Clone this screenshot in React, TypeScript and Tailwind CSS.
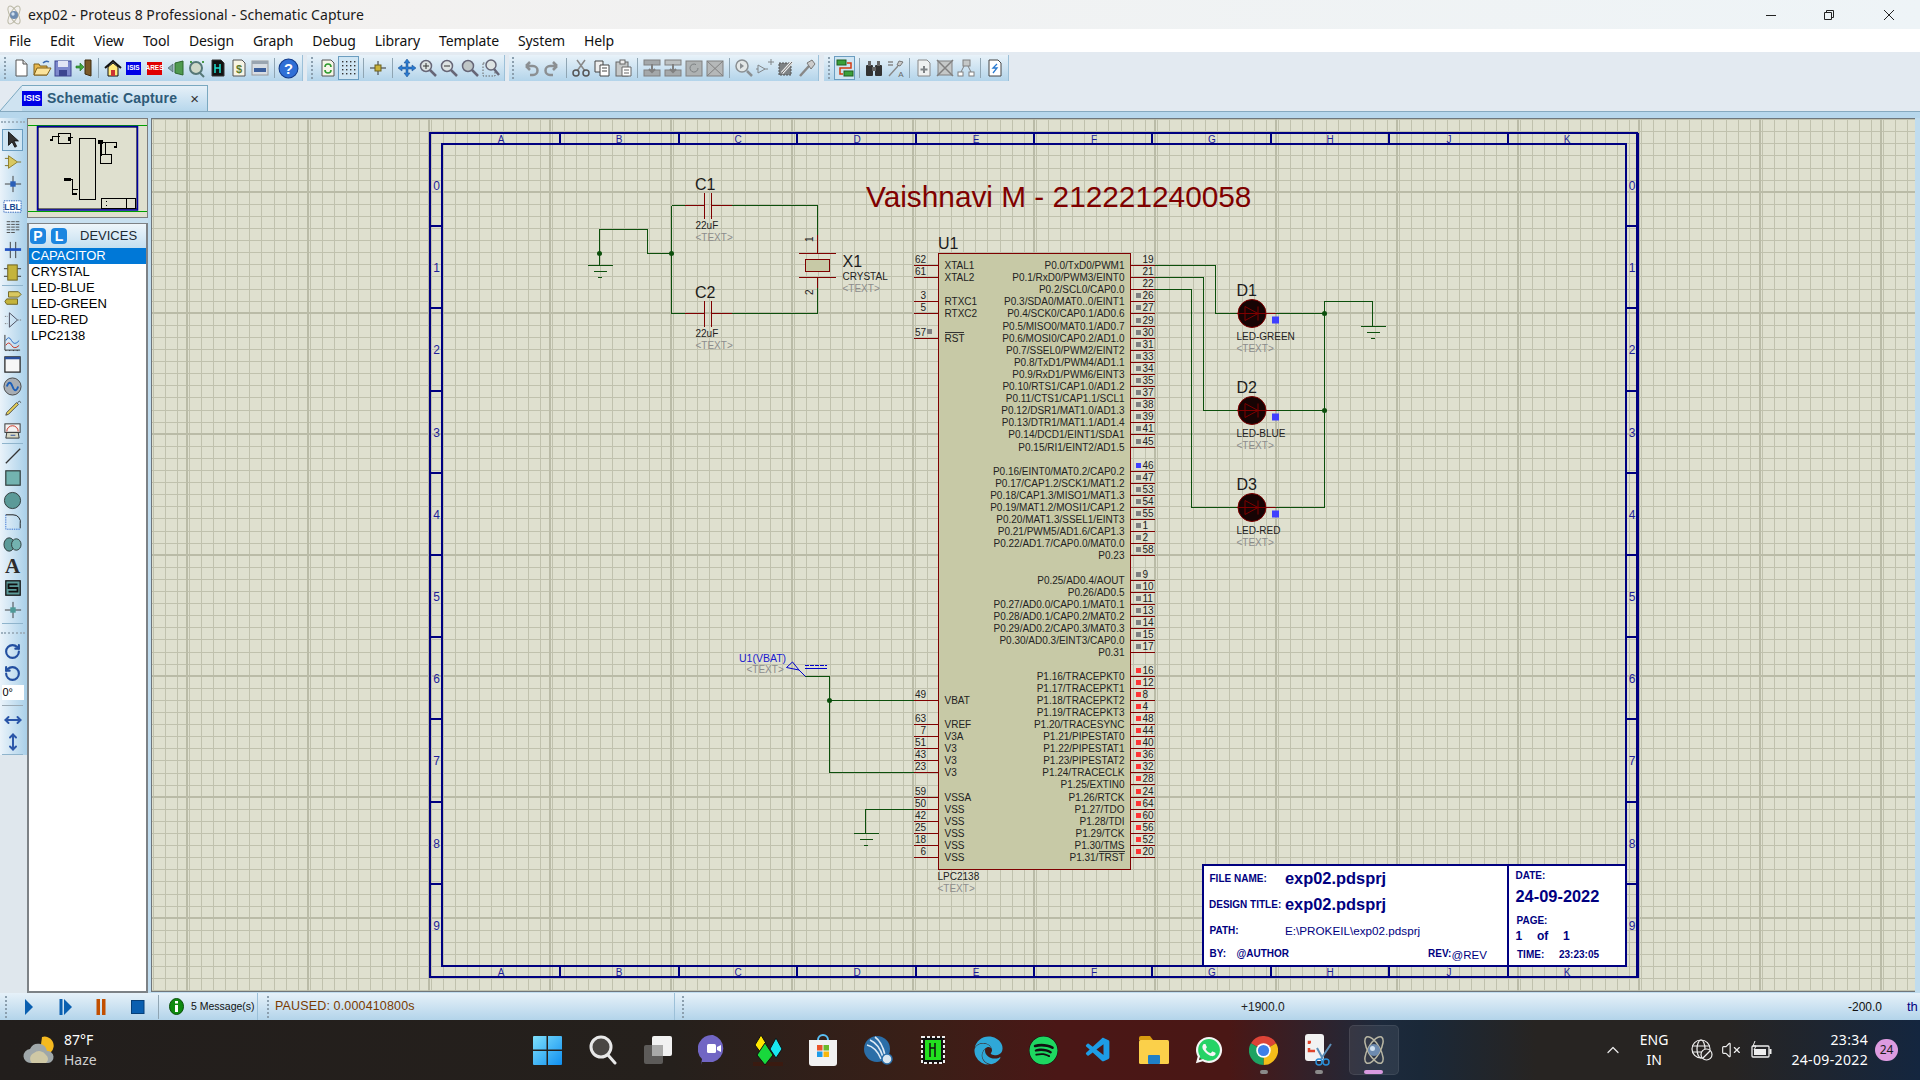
import type { ReactNode } from 'react';
import { RotateCw, RotateCcw, MoveHorizontal, MoveVertical, ChevronUp, VolumeX } from 'lucide-react';
import { FaEdge, FaSpotify, FaWhatsapp } from 'react-icons/fa';
import { VscVscode } from 'react-icons/vsc';

const WIRE = '#0c4f0c';
const RED = '#7f0000';
const NAVY = '#000080';
const GRAY_TEXT = '#8c8c8c';

type Pin = [number, string, string, string];

const rightPins: Pin[] = [
  [265, 'P0.0/TxD0/PWM1', '19', ''],
  [277, 'P0.1/RxD0/PWM3/EINT0', '21', ''],
  [289, 'P0.2/SCL0/CAP0.0', '22', ''],
  [301, 'P0.3/SDA0/MAT0..0/EINT1', '26', 'g'],
  [313, 'P0.4/SCK0/CAP0.1/AD0.6', '27', 'g'],
  [326, 'P0.5/MISO0/MAT0.1/AD0.7', '29', 'g'],
  [338, 'P0.6/MOSI0/CAP0.2/AD1.0', '30', 'g'],
  [350, 'P0.7/SSEL0/PWM2/EINT2', '31', 'g'],
  [362, 'P0.8/TxD1/PWM4/AD1.1', '33', 'g'],
  [374, 'P0.9/RxD1/PWM6/EINT3', '34', 'g'],
  [386, 'P0.10/RTS1/CAP1.0/AD1.2', '35', 'g'],
  [398, 'P0.11/CTS1/CAP1.1/SCL1', '37', 'g'],
  [410, 'P0.12/DSR1/MAT1.0/AD1.3', '38', 'g'],
  [422, 'P0.13/DTR1/MAT1.1/AD1.4', '39', 'g'],
  [434, 'P0.14/DCD1/EINT1/SDA1', '41', 'g'],
  [447, 'P0.15/RI1/EINT2/AD1.5', '45', 'g'],
  [471, 'P0.16/EINT0/MAT0.2/CAP0.2', '46', 'b'],
  [483, 'P0.17/CAP1.2/SCK1/MAT1.2', '47', 'g'],
  [495, 'P0.18/CAP1.3/MISO1/MAT1.3', '53', 'g'],
  [507, 'P0.19/MAT1.2/MOSI1/CAP1.2', '54', 'g'],
  [519, 'P0.20/MAT1.3/SSEL1/EINT3', '55', 'g'],
  [531, 'P0.21/PWM5/AD1.6/CAP1.3', '1', 'g'],
  [543, 'P0.22/AD1.7/CAP0.0/MAT0.0', '2', 'g'],
  [555, 'P0.23', '58', 'g'],
  [580, 'P0.25/AD0.4/AOUT', '9', 'g'],
  [592, 'P0.26/AD0.5', '10', 'g'],
  [604, 'P0.27/AD0.0/CAP0.1/MAT0.1', '11', 'g'],
  [616, 'P0.28/AD0.1/CAP0.2/MAT0.2', '13', 'g'],
  [628, 'P0.29/AD0.2/CAP0.3/MAT0.3', '14', 'g'],
  [640, 'P0.30/AD0.3/EINT3/CAP0.0', '15', 'g'],
  [652, 'P0.31', '17', 'g'],
  [676, 'P1.16/TRACEPKT0', '16', 'r'],
  [688, 'P1.17/TRACEPKT1', '12', 'r'],
  [700, 'P1.18/TRACEPKT2', '8', 'r'],
  [712, 'P1.19/TRACEPKT3', '4', 'r'],
  [724, 'P1.20/TRACESYNC', '48', 'r'],
  [736, 'P1.21/PIPESTAT0', '44', 'r'],
  [748, 'P1.22/PIPESTAT1', '40', 'r'],
  [760, 'P1.23/PIPESTAT2', '36', 'r'],
  [772, 'P1.24/TRACECLK', '32', 'r'],
  [784, 'P1.25/EXTIN0', '28', 'r'],
  [797, 'P1.26/RTCK', '24', 'r'],
  [809, 'P1.27/TDO', '64', 'r'],
  [821, 'P1.28/TDI', '60', 'r'],
  [833, 'P1.29/TCK', '56', 'r'],
  [845, 'P1.30/TMS', '52', 'r'],
  [857, 'P1.31/TRST', '20', 'r'],
];

const leftPins: [number, string, string][] = [
  [265, 'XTAL1', '62'],
  [277, 'XTAL2', '61'],
  [301, 'RTXC1', '3'],
  [313, 'RTXC2', '5'],
  [338, 'RST', '57'],
  [700, 'VBAT', '49'],
  [724, 'VREF', '63'],
  [736, 'V3A', '7'],
  [748, 'V3', '51'],
  [760, 'V3', '43'],
  [772, 'V3', '23'],
  [797, 'VSSA', '59'],
  [809, 'VSS', '50'],
  [821, 'VSS', '42'],
  [833, 'VSS', '25'],
  [845, 'VSS', '18'],
  [857, 'VSS', '6'],
];

const markerColors: Record<string, string> = { g: '#808080', b: '#3f3fff', r: '#ff3535' };

const colDividers = [560, 679, 797, 916, 1034, 1152, 1271, 1389, 1508];
const colLetters: [string, number][] = [
  ['A', 501],
  ['B', 619],
  ['C', 738],
  ['D', 857],
  ['E', 976],
  ['F', 1094],
  ['G', 1212],
  ['H', 1330],
  ['J', 1449],
  ['K', 1567],
];
const rowDividers = [226, 308, 391, 473, 555, 637, 719, 802, 884];

const minorX = Array.from({ length: 150 }, (_, i) => Math.round(152.5 + i * 12.1));
const minorY = Array.from({ length: 74 }, (_, i) => Math.round(119.1 + i * 12.1));
const majorX = Array.from({ length: 15 }, (_, i) => Math.round(187 + i * 121));
const majorY = [71, 192, 313, 434, 555, 676, 797, 918];

function Ground({ x, y }: { x: number; y: number }) {
  return (
    <g stroke={WIRE} shapeRendering="crispEdges">
      <path d={`M${x - 12} ${y}H${x + 13}M${x - 6} ${y + 6}H${x + 7}M${x - 2} ${y + 12}H${x + 2}`} />
    </g>
  );
}

function Dot({ x, y }: { x: number; y: number }) {
  return <circle cx={x} cy={y} r={2.5} fill={WIRE} />;
}

function Led({ y, name, part }: { y: number; name: string; part: string }) {
  return (
    <g>
      <text x={1236.5} y={y - 18} fontSize={16} fill="#1c1c1c">
        {name}
      </text>
      <circle cx={1252} cy={y} r={14} fill="#170404" stroke={RED} />
      <path d={`M1237 ${y}H1266M1245 ${y - 7}V${y + 7}L1258 ${y}ZM1258 ${y - 7}V${y + 7}`} fill="none" stroke={RED} />
      <path d={`M1266 ${y}H1276`} stroke={RED} shapeRendering="crispEdges" />
      <rect x={1272} y={y + 3} width={7} height={7} fill="#3f3fff" />
      <text x={1236.5} y={y + 26} fontSize={10} fill="#222">
        {part}
      </text>
      <text x={1236.5} y={y + 38} fontSize={10} fill={GRAY_TEXT}>
        {'<TEXT>'}
      </text>
    </g>
  );
}

function Capacitor({ y, name }: { y: number; name: string }) {
  return (
    <g>
      <path
        d={`M684.5 ${y}H704.5M704.5 ${y - 13}V${y + 13}M711.5 ${y - 13}V${y + 13}M711.5 ${y}H732`}
        stroke={RED}
        fill="none"
        shapeRendering="crispEdges"
      />
      <text x={695} y={y - 16} fontSize={16} fill="#1c1c1c">
        {name}
      </text>
      <text x={695.5} y={y + 23} fontSize={10} fill="#222">
        22uF
      </text>
      <text x={695.5} y={y + 35} fontSize={10} fill={GRAY_TEXT}>
        {'<TEXT>'}
      </text>
    </g>
  );
}

function TitleBlock() {
  const t = { fill: NAVY };
  return (
    <g {...t}>
      <rect x={1203} y={865} width={423} height={101} fill="#fff" stroke={NAVY} strokeWidth={2} shapeRendering="crispEdges" />
      <path d="M1508 865V966" stroke={NAVY} strokeWidth={2} shapeRendering="crispEdges" />
      <g fontSize={10} fontWeight={700}>
        <text x={1209.5} y={882}>FILE NAME:</text>
        <text x={1209} y={908}>DESIGN TITLE:</text>
        <text x={1209.5} y={934}>PATH:</text>
        <text x={1209.5} y={957}>BY:</text>
        <text x={1236.5} y={957}>@AUTHOR</text>
        <text x={1428} y={957}>REV:</text>
        <text x={1515.5} y={879}>DATE:</text>
        <text x={1516.5} y={924}>PAGE:</text>
        <text x={1517} y={958}>TIME:</text>
        <text x={1559} y={958}>23:23:05</text>
      </g>
      <g fontSize={16.4} fontWeight={700}>
        <text x={1285} y={883.5}>exp02.pdsprj</text>
        <text x={1285} y={910}>exp02.pdsprj</text>
        <text x={1515.5} y={902}>24-09-2022</text>
      </g>
      <text x={1285} y={935} fontSize={11.7}>{'E:\\PROKEIL\\exp02.pdsprj'}</text>
      <text x={1451.5} y={959} fontSize={11.5}>@REV</text>
      <g fontSize={12} fontWeight={700}>
        <text x={1515.5} y={939.5}>1</text>
        <text x={1537} y={939.5}>of</text>
        <text x={1563} y={939.5}>1</text>
      </g>
    </g>
  );
}

function Schematic() {
  return (
    <svg width={1763} height={872} viewBox="152 119 1763 872" className="block font-['Liberation_Sans',Arial,sans-serif]">
      <rect x={152} y={118} width={1763} height={873} fill="#dfe0cf" />

      {/* grid */}
      <g stroke="#c0c1ad" shapeRendering="crispEdges">
        {minorX.map((x) => (
          <path key={x} d={`M${x + 0.5} 118V991`} />
        ))}
        {minorY.map((y) => (
          <path key={y} d={`M152 ${y + 0.5}H1915`} />
        ))}
      </g>
      <g stroke="#babba7" strokeWidth={2} shapeRendering="crispEdges">
        {majorX.map((x) => (
          <path key={x} d={`M${x} 118V991`} />
        ))}
        {majorY.map((y) => (
          <path key={y} d={`M152 ${y}H1915`} />
        ))}
      </g>

      {/* sheet frame */}
      <g stroke={NAVY} strokeWidth={2} fill="none" shapeRendering="crispEdges">
        <rect x={430} y={133} width={1207} height={844} />
        <rect x={442} y={144} width={1184} height={822} />
        {colDividers.map((x) => (
          <path key={x} d={`M${x} 133V144M${x} 966V977`} />
        ))}
        {rowDividers.map((y) => (
          <path key={y} d={`M430 ${y}H442M1626 ${y}H1637`} />
        ))}
      </g>
      <path d="M1638.5 133V978" stroke={NAVY} fill="none" shapeRendering="crispEdges" />
      <g fontSize={10} fill="#1f1f99" textAnchor="middle">
        {colLetters.map(([l, x]) => (
          <g key={l}>
            <text x={x} y={143}>{l}</text>
            <text x={x} y={976}>{l}</text>
          </g>
        ))}
      </g>
      <g fontSize={12} fill="#1f1f99" textAnchor="middle">
        {Array.from({ length: 10 }, (_, i) => (
          <g key={i}>
            <text x={436.5} y={190 + i * 82.2}>{i}</text>
            <text x={1632} y={190 + i * 82.2}>{i}</text>
          </g>
        ))}
      </g>

      <text x={866} y={207} fontSize={29.8} fill={RED}>
        Vaishnavi M - 212221240058
      </text>

      {/* crystal section wires */}
      <g fill="none" stroke={WIRE} shapeRendering="crispEdges">
        <path d="M599.5 253V229.5H647.5V253.5H671.5M599.5 253V265M671.5 205.5V313.5M671.5 205.5H685M671.5 313.5H685M732 205.5H817.5V235M732 313.5H817.5V288" />
      </g>
      <Ground x={599.5} y={265.5} />
      <Dot x={599.5} y={253.5} />
      <Dot x={671.5} y={253.5} />
      <Capacitor y={205.5} name="C1" />
      <Capacitor y={313.5} name="C2" />
      <g fill="none" stroke={RED} shapeRendering="crispEdges">
        <path d="M817.5 235V253.5M799 253.5H836M799 277.5H836M817.5 277.5V288" />
        <rect x={805.5} y={259.5} width={24} height={12} fill="#c7c9a6" />
      </g>
      <text transform="translate(813 242) rotate(-90)" fontSize={10} fill="#222">1</text>
      <text transform="translate(813 295) rotate(-90)" fontSize={10} fill="#222">2</text>
      <text x={842.5} y={267} fontSize={16} fill="#1c1c1c">X1</text>
      <text x={842.5} y={280} fontSize={10} fill="#222">CRYSTAL</text>
      <text x={842.5} y={292} fontSize={10} fill={GRAY_TEXT}>{'<TEXT>'}</text>

      {/* U1 */}
      <text x={938} y={249} fontSize={16} fill="#1c1c1c">U1</text>
      <rect x={938.5} y={253.5} width={192} height={616} fill="#c7c9a6" stroke={RED} shapeRendering="crispEdges" />
      <g stroke={RED} shapeRendering="crispEdges">
        {rightPins.map(([y, , n]) => (
          <path key={n} d={`M1131 ${y + 0.5}H1155`} />
        ))}
        {leftPins.map(([y, , n]) => (
          <path key={n} d={`M914 ${y + 0.5}H938`} />
        ))}
      </g>
      <g fontSize={10} fill="#222">
        {rightPins.map(([y, label, n, m]) => (
          <g key={n}>
            <text x={1124.5} y={y + 3.5} textAnchor="end">{label}</text>
            <text x={1142.5} y={y - 2.5}>{n}</text>
            {m && <rect x={1136} y={y - 8} width={5} height={5} fill={markerColors[m]} />}
          </g>
        ))}
        {leftPins.map(([y, label, n]) => (
          <g key={n}>
            <text x={944.5} y={y + 3.5}>{label}</text>
            <text x={926} y={y - 2.5} textAnchor="end">{n}</text>
          </g>
        ))}
      </g>
      <rect x={927} y={329} width={5} height={5} fill="#808080" />
      <path d="M944.5 332.5H964M1098.5 851.5H1124.5" stroke="#333" shapeRendering="crispEdges" />
      <text x={937.5} y={880} fontSize={10} fill="#222">LPC2138</text>
      <text x={937.5} y={892} fontSize={10} fill={GRAY_TEXT}>{'<TEXT>'}</text>

      {/* LEDs and their wires */}
      <g fill="none" stroke={WIRE} shapeRendering="crispEdges">
        <path d="M1155 265.5H1215.5V313.5H1237M1155 277.5H1203.5V410.5H1237M1155 289.5H1191.5V507.5H1237" />
        <path d="M1276 313.5H1324.5M1266 410.5H1324.5M1266 507.5H1324.5V301.5H1372.5V326" />
      </g>
      <Led y={313.5} name="D1" part="LED-GREEN" />
      <Led y={410.5} name="D2" part="LED-BLUE" />
      <Led y={507.5} name="D3" part="LED-RED" />
      <Dot x={1324.5} y={313.5} />
      <Dot x={1324.5} y={410.5} />
      <Ground x={1372.5} y={326.5} />

      {/* power terminal and ground at the bottom */}
      <g fill="none" stroke={WIRE} shapeRendering="crispEdges">
        <path d="M805 676.5H829.5V772.5H914M829.5 700.5H914M914 809.5H865.5V833" />
      </g>
      <Dot x={829.5} y={700.5} />
      <Ground x={865.5} y={833.5} />
      <path d="M805.5 676.5L799 670L786.5 667.5L792.5 662L799 670" fill="none" stroke="#0000cc" />
      <path d="M805 668.5H827" stroke="#0000cc" shapeRendering="crispEdges" />
      <path d="M805 665.5H827" stroke="#0000cc" strokeDasharray="4 1" shapeRendering="crispEdges" />
      <text x={739} y={661.5} fontSize={10.5} fill="#1a1ad0">U1(VBAT)</text>
      <text x={746.5} y={673} fontSize={10} fill={GRAY_TEXT}>{'<TEXT>'}</text>

      <TitleBlock />
    </svg>
  );
}

function Ico({ children, size = 20 }: { children: ReactNode; size?: number }) {
  return (
    <svg width={size} height={size} viewBox="0 0 20 20" className="shrink-0">
      {children}
    </svg>
  );
}

function Cell({ children, active }: { children: ReactNode; active?: boolean }) {
  return (
    <div
      className={
        active
          ? 'flex h-[24px] w-[21px] shrink-0 items-center justify-center border border-[#6b9dc0] bg-[#cfe5f3]'
          : 'flex h-[24px] w-[21px] shrink-0 items-center justify-center'
      }
    >
      {children}
    </div>
  );
}

function Sep() {
  return <div className="mx-[3.5px] h-[20px] w-px shrink-0 bg-[#8fa5b3]" />;
}

function Grip() {
  return <div className="h-[22px] w-[2px] shrink-0 border-l-2 border-dotted border-[#8b9fae]" />;
}

function Section({ children, className }: { children: ReactNode; className: string }) {
  return (
    <div className={`flex h-[26px] items-center border-r border-[#9cc0d8] bg-linear-to-b from-[#e8f2f9] to-[#b3d4ea] ${className}`}>
      {children}
    </div>
  );
}

function SmallLogo({ label, color }: { label: string; color: string }) {
  return (
    <div
      className="flex h-[13px] w-[15px] shrink-0 items-center justify-center text-[6.5px] leading-none font-bold text-white"
      style={{ background: color }}
    >
      {label}
    </div>
  );
}

function MainToolbar() {
  return (
    <div className="flex h-[29px] shrink-0 items-end bg-[#e3eaf1] pb-0">
      <Section className="w-[303px] pl-[4px]">
        <Grip />
        <div className="w-[4px]" />
        <Cell><Ico><path d="M5 2h7l4 4v12H5z" fill="#fff" stroke="#555" /><path d="M12 2v4h4" fill="#ddd" stroke="#555" /></Ico></Cell>
        <Cell><Ico><path d="M2 17V6h5l1 2h7v9z" fill="#e7b84f" stroke="#80611a" /><path d="M2 17l3-7h14l-4 7z" fill="#fbe39b" stroke="#80611a" /><path d="M11 5q3-3 6-1" fill="none" stroke="#3c6ab0" strokeWidth={1.5} /></Ico></Cell>
        <Cell><Ico><rect x={2} y={3} width={16} height={15} fill="#7d88cc" stroke="#3c4590" /><rect x={5} y={3} width={10} height={6} fill="#e2e5f5" /><rect x={6} y={12} width={8} height={6} fill="#3c4590" /></Ico></Cell>
        <Cell><Ico><path d="M11 2h6v16l-6-2z" fill="#7a5a28" stroke="#3e2c10" /><path d="M2 8h4V5l4 4-4 4v-3H2z" fill="#3fa83f" stroke="#1d6b1d" strokeWidth={0.6} /></Ico></Cell>
        <Sep />
        <Cell><Ico><path d="M2 10l8-7 8 7" fill="none" stroke="#111" strokeWidth={2} /><path d="M5 9l5-4 5 4v9H5z" fill="#ffe97a" stroke="#111" /><rect x={8} y={12} width={4} height={6} fill="#c33" /></Ico></Cell>
        <Cell><SmallLogo label="ISIS" color="#0000e6" /></Cell>
        <Cell><SmallLogo label="ARES" color="#e00000" /></Cell>
        <Cell><Ico><path d="M2 10l5-4v8z" fill="#7fa6a0" stroke="#456" strokeWidth={0.6} /><path d="M9 5l8-2v14l-8-2z" fill="#4f9a4f" stroke="#2d662d" /></Ico></Cell>
        <Cell><Ico><circle cx={9} cy={10} r={6} fill="#cfd8c8" stroke="#577" strokeWidth={2} /><path d="M13 15l4 4" stroke="#577" strokeWidth={2} /><path d="M3 3h2v2H3zM15 3h2v2h-2z" fill="#4a9a4a" /></Ico></Cell>
        <Cell><Ico><path d="M4 2h9l3 3v13H4z" fill="#111" stroke="#333" /><path d="M7 6v9M12 6v9M7 10h5" stroke="#1fe0d0" strokeWidth={1.5} /></Ico></Cell>
        <Cell><Ico><path d="M4 2h9l3 3v13H4z" fill="#f7f4e4" stroke="#555" /><text x={10} y={15} fontSize={11} fontWeight={700} fill="#5c7a2a" textAnchor="middle">$</text></Ico></Cell>
        <Cell><Ico><rect x={2} y={3} width={16} height={14} fill="#d7dde3" stroke="#999" /><rect x={2} y={3} width={16} height={3} fill="#9aa5b0" /><rect x={4} y={10} width={12} height={4} fill="#3c5f9c" /></Ico></Cell>
        <Sep />
        <Cell><Ico size={21}><circle cx={10} cy={10} r={9} fill="#2f6fd6" stroke="#123a8a" /><text x={10} y={15} fontSize={14} fontWeight={700} fill="#fff" textAnchor="middle">?</text></Ico></Cell>
      </Section>
      <Section className="ml-[4px] w-[198px] pl-[4px]">
        <Grip />
        <div className="w-[4px]" />
        <Cell><Ico><path d="M4 2h9l3 3v13H4z" fill="#f6f5e8" stroke="#555" /><path d="M7 9a3 3 0 0 1 6 0M13 12a3 3 0 0 1-6 0" fill="none" stroke="#2f9a2f" strokeWidth={1.6} /></Ico></Cell>
        <Cell active><Ico><g fill="#333"><rect x={3} y={3} width={1.4} height={1.4} /><rect x={7} y={3} width={1.4} height={1.4} /><rect x={11} y={3} width={1.4} height={1.4} /><rect x={15} y={3} width={1.4} height={1.4} /><rect x={3} y={7} width={1.4} height={1.4} /><rect x={7} y={7} width={1.4} height={1.4} /><rect x={11} y={7} width={1.4} height={1.4} /><rect x={15} y={7} width={1.4} height={1.4} /><rect x={3} y={11} width={1.4} height={1.4} /><rect x={7} y={11} width={1.4} height={1.4} /><rect x={11} y={11} width={1.4} height={1.4} /><rect x={15} y={11} width={1.4} height={1.4} /><rect x={3} y={15} width={1.4} height={1.4} /><rect x={7} y={15} width={1.4} height={1.4} /><rect x={11} y={15} width={1.4} height={1.4} /><rect x={15} y={15} width={1.4} height={1.4} /></g></Ico></Cell>
        <Sep />
        <Cell><Ico><path d="M2 10h16M10 3v14" stroke="#333" /><rect x={7} y={7} width={6} height={6} fill="#c9b23a" stroke="#6b5f1c" /></Ico></Cell>
        <Sep />
        <Cell><Ico><path d="M10 1l3 4h-2v4h4V7l4 3-4 3v-2h-4v4h2l-3 4-3-4h2v-4H5v2l-4-3 4-3v2h4V5H7z" fill="#2a7ad0" stroke="#14488a" strokeWidth={0.5} /></Ico></Cell>
        <Cell><Ico><circle cx={8} cy={8} r={5.5} fill="#dde3e3" stroke="#667" strokeWidth={1.5} /><path d="M12 12l6 6" stroke="#667" strokeWidth={2.5} /><path d="M5 8h6M8 5v6" stroke="#333" /></Ico></Cell>
        <Cell><Ico><circle cx={8} cy={8} r={5.5} fill="#dde3e3" stroke="#667" strokeWidth={1.5} /><path d="M12 12l6 6" stroke="#667" strokeWidth={2.5} /><path d="M5 8h6" stroke="#333" /></Ico></Cell>
        <Cell><Ico><circle cx={8} cy={8} r={5.5} fill="#bfc6c6" stroke="#667" strokeWidth={1.5} /><path d="M12 12l6 6" stroke="#667" strokeWidth={2.5} /></Ico></Cell>
        <Cell><Ico><rect x={2} y={5} width={12} height={13} fill="none" stroke="#666" strokeDasharray="1.5 1.5" /><circle cx={10} cy={7} r={5} fill="#dde3e3" stroke="#667" strokeWidth={1.5} /><path d="M13 11l5 6" stroke="#667" strokeWidth={2.5} /></Ico></Cell>
      </Section>
      <Section className="ml-[4px] w-[310px] pl-[3px]">
        <Grip />
        <div className="w-[6px]" />
        <Cell><Ico><path d="M5 8h7a4 4 0 0 1 0 9H9M5 8l4-4M5 8l4 4" fill="none" stroke="#8b8f92" strokeWidth={2.5} /></Ico></Cell>
        <Cell><Ico><path d="M15 8H8a4 4 0 0 0 0 9h3M15 8l-4-4M15 8l-4 4" fill="none" stroke="#8b8f92" strokeWidth={2.5} /></Ico></Cell>
        <Sep />
        <Cell><Ico><path d="M6 2l8 11M14 2L6 13" stroke="#888" strokeWidth={1.5} /><circle cx={5} cy={15} r={3} fill="none" stroke="#555" strokeWidth={1.5} /><circle cx={15} cy={15} r={3} fill="none" stroke="#555" strokeWidth={1.5} /></Ico></Cell>
        <Cell><Ico><path d="M3 3h8v11H3z" fill="#eee" stroke="#444" /><path d="M8 7h9v11H8z" fill="#fff" stroke="#444" /><path d="M10 10h5M10 13h5" stroke="#444" /></Ico></Cell>
        <Cell><Ico><rect x={3} y={4} width={12} height={14} fill="#c5c8c8" stroke="#666" /><rect x={7} y={2} width={5} height={4} fill="#eee" stroke="#666" /><path d="M9 9h9v9H9z" fill="#fff" stroke="#666" /><path d="M11 12h5M11 15h5" stroke="#666" /></Ico></Cell>
        <Sep />
        <Cell><Ico><rect x={2} y={2} width={16} height={5} fill="#a4a8aa" stroke="#808080" /><rect x={2} y={12} width={16} height={6} fill="#a4a8aa" stroke="#808080" /><path d="M10 6v8M7 11l3 3 3-3" fill="none" stroke="#808080" strokeWidth={2} /></Ico></Cell>
        <Cell><Ico><rect x={2} y={2} width={16} height={5} fill="#bcc0c1" stroke="#808080" /><rect x={2} y={12} width={16} height={6} fill="#a4a8aa" stroke="#808080" /><path d="M10 6v8M7 11l3 3 3-3" fill="none" stroke="#808080" strokeWidth={2} /></Ico></Cell>
        <Cell><Ico><rect x={2} y={3} width={16} height={15} fill="#aeb2b3" stroke="#808080" /><path d="M14 10a4 4 0 1 1-2-3.4" fill="none" stroke="#7c8082" /></Ico></Cell>
        <Cell><Ico><rect x={2} y={3} width={16} height={15} fill="#b5b8b9" stroke="#808080" /><path d="M2 3l16 15M18 3L2 18" stroke="#808080" /></Ico></Cell>
        <Sep />
        <Cell><Ico><circle cx={8} cy={8} r={6} fill="#e3e7e7" stroke="#8a8f92" strokeWidth={1.5} /><path d="M13 13l5 5" stroke="#8a8f92" strokeWidth={2.5} /><path d="M6 5v6l4-3z" fill="#8a8f92" /></Ico></Cell>
        <Cell><Ico><path d="M3 7v8l7-4zM1 11h2M10 11h3M13 4h6M16 1v6" fill="none" stroke="#808588" /></Ico></Cell>
        <Cell><Ico><rect x={3} y={5} width={12} height={12} fill="#7d8184" stroke="#555" strokeDasharray="2 1" /><path d="M6 15L16 4" stroke="#eee" strokeWidth={3} /><path d="M6 15L16 4" stroke="#666" /></Ico></Cell>
        <Cell><Ico><path d="M3 18L12 8" stroke="#888" strokeWidth={2.5} /><path d="M10 5l5-3 3 4-4 5z" fill="#ccc" stroke="#777" /></Ico></Cell>
      </Section>
      <Section className="ml-[5px] w-[185px] pl-[4px]">
        <Grip />
        <div className="w-[4px]" />
        <Cell active><Ico><rect x={2} y={2} width={9} height={5} fill="#3aa03a" stroke="#1f5c1f" /><rect x={9} y={13} width={9} height={5} fill="#3aa03a" stroke="#1f5c1f" /><path d="M12 5h4v5H5v6h3" fill="none" stroke="#d43a10" strokeWidth={1.5} /></Ico></Cell>
        <Sep />
        <Cell><Ico><rect x={2} y={7} width={7} height={11} rx={1} fill="#333" /><rect x={11} y={7} width={7} height={11} rx={1} fill="#333" /><rect x={4} y={3} width={3} height={5} fill="#666" /><rect x={13} y={3} width={3} height={5} fill="#666" /><rect x={8} y={9} width={4} height={4} fill="#666" /></Ico></Cell>
        <Cell><Ico><path d="M3 4h5M3 7h5M4 18l9-10" fill="none" stroke="#888" strokeWidth={1.4} /><path d="M12 7l2-4 4 1-3 4z" fill="#ccc" stroke="#777" /><text x={16} y={19} fontSize={8} fill="#666" textAnchor="middle">A</text></Ico></Cell>
        <Sep />
        <Cell><Ico><path d="M4 2h9l3 3v13H4z" fill="#eef0f0" stroke="#888" /><path d="M10 8v7M6.5 11.5h7" stroke="#7d8184" strokeWidth={2} /></Ico></Cell>
        <Cell><Ico><path d="M3 3h14v14H3z" fill="#c5c8c8" stroke="#808080" /><path d="M2 2l16 16M18 2L2 18" stroke="#808080" strokeWidth={1.5} /></Ico></Cell>
        <Cell><Ico><rect x={7} y={2} width={7} height={6} fill="#c5c8c8" stroke="#808080" /><rect x={2} y={14} width={5} height={4} fill="#fff" stroke="#808080" /><rect x={13} y={14} width={5} height={4} fill="#fff" stroke="#808080" /><path d="M5 14l3-6M15 14l-3-6" stroke="#808080" /></Ico></Cell>
        <Sep />
        <Cell><Ico><path d="M4 2h9l3 3v13H4z" fill="#fff" stroke="#444" /><path d="M12 6l-4 4h4l-4 5" fill="none" stroke="#2a7ad0" strokeWidth={1.3} /></Ico></Cell>
      </Section>
    </div>
  );
}

function Tool({ children, active }: { children: ReactNode; active?: boolean }) {
  return (
    <div
      className={
        active
          ? 'flex h-[22px] w-[21px] items-center justify-center border border-[#6b9dc0] bg-[#cfe5f3]'
          : 'flex h-[22px] w-[21px] items-center justify-center'
      }
    >
      {children}
    </div>
  );
}

function ToolSep() {
  return <div className="my-[1.5px] h-px w-[21px] bg-[#8fb4cc]" />;
}

function LeftTools() {
  return (
    <div className="flex w-[27px] shrink-0 flex-col bg-[#dfe7ed]">
      <div className="flex flex-col items-center bg-linear-to-r from-[#eaf3fa] to-[#a9d0e9] pr-[3px] pl-[1px]">
        <div className="mt-[3px] mb-[6px] h-[2px] w-[24px] border-t-2 border-dotted border-[#9fb2c0]" />
        <Tool active><Ico size={18}><path d="M5 1v15l4-4 3 6 2-1-3-6h5z" fill="#333" stroke="#111" /></Ico></Tool>
        <Tool><Ico size={18}><path d="M1 6h5M1 14h5M15 10h4" stroke="#7a6b20" /><path d="M5 3l10 7-10 7z" fill="#d9c860" stroke="#8c7a22" /></Ico></Tool>
        <Tool><Ico size={18}><path d="M1 10h18M10 1v18" stroke="#333" /><rect x={7} y={7} width={6} height={6} fill="#2a5fb8" /></Ico></Tool>
        <Tool><Ico size={19}><rect x={1} y={4} width={18} height={12} fill="#fff" stroke="#2a5fb8" strokeDasharray="1.5 1" /><text x={10} y={13.5} fontSize={9} fontWeight={700} fill="#1d4a92" textAnchor="middle">LBL</text></Ico></Tool>
        <Tool><Ico size={18}><path d="M3 3h14M3 6h14M3 9h14M3 12h14M3 15h10" stroke="#444" strokeDasharray="4 1" /></Ico></Tool>
        <Tool><Ico size={18}><path d="M7 1v18M13 1v18" stroke="#333" /><rect x={1} y={8} width={18} height={3} fill="#2050c0" /></Ico></Tool>
        <Tool><Ico size={19}><path d="M1 6h4M15 6h4M1 14h4M15 14h4" stroke="#333" /><rect x={5} y={2} width={10} height={16} fill="#c4b43c" stroke="#6b5f1c" /></Ico></Tool>
        <ToolSep />
        <Tool><Ico size={18}><path d="M5 3h11l3 3-3 3H5z" fill="#d9c860" stroke="#6b5f1c" /><path d="M3 11h12v6H3l-2-3z" fill="#c4b43c" stroke="#6b5f1c" /></Ico></Tool>
        <Tool><Ico size={18}><path d="M1 6h3M1 14h3M15 10h4" stroke="#777" strokeDasharray="1.5 1" /><path d="M6 2l9 8-9 8z" fill="none" stroke="#445" /></Ico></Tool>
        <Tool><Ico size={19}><path d="M2 2v16h16" fill="none" stroke="#333" /><path d="M3 8q3-6 6 0t8 0" fill="none" stroke="#2a6ac0" /><path d="M3 13q3-5 6 0t8 0" fill="none" stroke="#c83020" /><path d="M3 18v1M7 18v1M11 18v1M15 18v1" stroke="#333" /></Ico></Tool>
        <Tool><Ico size={19}><rect x={2} y={2} width={16} height={16} fill="#f7f7f7" stroke="#222" strokeWidth={1.3} /><rect x={2} y={2} width={16} height={2.5} fill="#2a4f9c" /></Ico></Tool>
        <Tool><Ico size={19}><circle cx={10} cy={10} r={9} fill="#a8adb3" stroke="#444" /><path d="M4 10q3-8 6 0t6 0" fill="none" stroke="#1d5fb8" strokeWidth={2} /></Ico></Tool>
        <Tool><Ico size={18}><path d="M2 18l3-1L16 6l-2-2L3 15z" fill="#e6cf55" stroke="#444" /><path d="M15 4q2-3 4 0" fill="none" stroke="#444" /></Ico></Tool>
        <Tool><Ico size={19}><rect x={2} y={3} width={16} height={9} fill="#f3f3f3" stroke="#333" /><path d="M4 11a6 6 0 0 1 12 0" fill="none" stroke="#c83020" /><path d="M4 12l-1 6h14l-1-6z" fill="#d8d8c4" stroke="#333" /><path d="M8 15h5" stroke="#2a4f9c" /></Ico></Tool>
        <ToolSep />
        <Tool><Ico size={18}><path d="M2 18L18 2" stroke="#333" strokeWidth={1.4} /></Ico></Tool>
        <Tool><Ico size={18}><rect x={2} y={2} width={16} height={16} fill="#73b3b0" stroke="#2e3a3a" strokeWidth={1.3} /></Ico></Tool>
        <Tool><Ico size={19}><circle cx={10} cy={10} r={8.5} fill="#5b9a98" stroke="#2e3a3a" /></Ico></Tool>
        <Tool><Ico size={18}><path d="M2 2h8a8 8 0 0 1 8 10v5" fill="none" stroke="#111" /><path d="M2 2v16h16" fill="none" stroke="#2a6ad0" strokeDasharray="1.5 1" /></Ico></Tool>
        <Tool><Ico size={19}><ellipse cx={6.5} cy={10} rx={5.5} ry={7} fill="#5b9a98" stroke="#2e3a3a" /><ellipse cx={14} cy={10} rx={5} ry={6} fill="#73b3b0" stroke="#2e3a3a" /></Ico></Tool>
        <Tool><span className="font-['Liberation_Serif',serif] text-[21px] leading-none font-bold text-[#2c2c2c]">A</span></Tool>
        <Tool><Ico size={18}><rect x={2} y={2} width={16} height={16} fill="#5b9a98" stroke="#111" strokeWidth={1.4} /><path d="M15 6H5v4h10v4H5" fill="none" stroke="#111" strokeWidth={2} /></Ico></Tool>
        <Tool><Ico size={18}><path d="M1 10h18M10 1v18" stroke="#333" /><rect x={7} y={7} width={6} height={6} fill="#4f9a98" /></Ico></Tool>
        <ToolSep />
      </div>
      <div className="flex flex-col items-center bg-linear-to-r from-[#eaf3fa] to-[#a9d0e9] pr-[3px] pl-[1px]">
        <div className="mt-[7px] mb-[6px] h-[2px] w-[24px] border-t-2 border-dotted border-[#9fb2c0]" />
        <Tool><RotateCw size={17} strokeWidth={3} color="#234fa0" /></Tool>
        <Tool><RotateCcw size={17} strokeWidth={3} color="#234fa0" /></Tool>
        <div className="mt-px flex h-[15px] w-[22px] items-center bg-white pl-px text-[11px] text-black">0°</div>
        <div className="mt-[5px] mb-[3px] h-px w-[21px] bg-[#9aa9b4]" />
        <Tool><MoveHorizontal size={18} strokeWidth={2.6} color="#2a55a8" /></Tool>
        <Tool><MoveVertical size={18} strokeWidth={2.6} color="#2a55a8" /></Tool>
        <div className="mt-[1px] h-px w-[21px] bg-[#8fb4cc]" />
      </div>
    </div>
  );
}

function Preview() {
  return (
    <div className="relative h-[100px] shrink-0 border border-[#7d7d7d] bg-[#dfe0cf]">
      <svg width={119} height={98} viewBox="28 119 119 98" className="block">
        <path d="M28 125H147M28 211H147" stroke="#00a000" shapeRendering="crispEdges" />
        <rect x={38} y={127} width={99} height={82} fill="#dfe0cf" stroke="#000" strokeWidth={1} />
        <rect x={37.5} y={126.5} width={100} height={83.5} fill="none" stroke="#0000a0" strokeWidth={1.5} />
        <g fill="none" stroke="#000" shapeRendering="crispEdges">
          <rect x={79.5} y={138.5} width={16} height={61} />
          <path d="M52 141V136.5H60M58 132.5V143.5H70V133H58M69 137H73" />
          <path d="M100 142V163H111.5M100 142H116V146M100 154H111.5V163M105 142V154" />
          <path d="M65 179H72V189H78M72 189V193H76" />
          <rect x={101.5} y={198.5} width={34} height={10} />
          <path d="M126.5 198.5V208.5M106 201v1M106 205v1" />
        </g>
        <g fill="#000">
          <rect x={98} y={140} width={5} height={4} />
          <rect x={100} y={144} width={2} height={12} />
          <rect x={64} y={178} width={7} height={3} />
          <rect x={72} y={193} width={5} height={2} />
          <rect x={68} y={137} width={3} height={4} />
          <rect x={50} y={139} width={2} height={2} />
          <rect x={114} y={146} width={3} height={2} />
        </g>
      </svg>
    </div>
  );
}

const devices = ['CAPACITOR', 'CRYSTAL', 'LED-BLUE', 'LED-GREEN', 'LED-RED', 'LPC2138'];

function DevicePanel() {
  return (
    <div className="flex w-[121px] shrink-0 flex-col bg-[#c8e0f0]">
      <Preview />
      <div className="mt-[5px] flex min-h-0 flex-1 flex-col border-x-2 border-b-2 border-[#7d8286]">
        <div className="flex h-[25px] shrink-0 items-center border-t border-[#7d8286] bg-linear-to-b from-[#eef6fb] to-[#c4dff0] pl-[1px]">
          <div className="flex h-[16px] w-[16px] items-center justify-center rounded-[4px] bg-[#1c86e0] text-[14px] leading-none font-bold text-white">P</div>
          <div className="ml-[5px] flex h-[16px] w-[16px] items-center justify-center rounded-[4px] bg-[#1c86e0] text-[14px] leading-none font-bold text-white">L</div>
          <span className="ml-[13px] text-[13px] text-[#1c2a33]">DEVICES</span>
        </div>
        <div className="flex-1 bg-white">
          {devices.map((d, i) => (
            <div
              key={d}
              className={
                i === 0
                  ? 'flex h-[16px] items-center bg-[#0078d7] pl-[2px] text-[13px] text-white'
                  : 'flex h-[16px] items-center pl-[2px] text-[13px] text-black'
              }
            >
              {d}
            </div>
          ))}
        </div>
      </div>
    </div>
  );
}

function TabRow() {
  return (
    <div className="flex h-[37px] shrink-0 flex-col bg-[#e3eaf1]">
      <div className="flex h-[30px] items-end pt-[4px]">
        <svg width={22} height={26} viewBox="0 0 22 26" className="shrink-0">
          <path d="M0 26L22 1V26Z" fill="#cfe3f1" />
          <path d="M0 26L22 0.5" stroke="#7aa8c0" fill="none" />
        </svg>
        <div className="flex h-[26px] w-[186px] items-center border-t border-r border-[#7aa8c0] bg-linear-to-b from-[#e6f0f8] to-[#b7d7ec]">
          <div className="flex h-[15px] w-[20px] shrink-0 items-center justify-center bg-[#0000e6] text-[9px] leading-none font-bold text-white">ISIS</div>
          <span className="ml-[5px] text-[14px] font-bold tracking-[0.2px] text-[#2d5a78]">Schematic Capture</span>
          <span className="ml-[13px] text-[15px] leading-none text-[#333]">×</span>
        </div>
      </div>
      <div className="h-[7px] border-t border-[#86a9bf] bg-[#b7d7ec]" />
    </div>
  );
}

function StatusBar() {
  return (
    <div className="flex h-[27px] shrink-0 items-center bg-linear-to-b from-[#e6f1f9] to-[#b3d4ea] text-[13px]">
      <div className="ml-[5px] h-[22px] w-[2px] border-l-2 border-dotted border-[#8b9fae]" />
      <svg width={140} height={20} viewBox="7 0 140 20" className="shrink-0">
        <path d="M25 2l8 8-8 8z" fill="#0a5fb0" />
        <path d="M59.5 2h3v16h-3zM64 2l8 8-8 8z" fill="#0a5fb0" />
        <path d="M96.5 2h3.5v16h-3.5zM102 2h3.5v16H102z" fill="#c24f00" />
        <rect x={131.5} y={3.5} width={12.5} height={13} fill="#0a5fb0" stroke="#063f78" />
      </svg>
      <div className="ml-[11px] h-[24px] w-px bg-[#8fa5b3]" />
      <svg width={15} height={17} viewBox="0 0 15 17" className="ml-[10px] shrink-0">
        <ellipse cx={7.5} cy={8.5} rx={7} ry={8} fill="#0f8a0f" stroke="#0a4f0a" />
        <rect x={6} y={7} width={3} height={7} fill="#fff" />
        <rect x={6} y={3} width={3} height={2.5} fill="#fff" />
      </svg>
      <span className="ml-[7px] w-[66px] text-[10.5px] whitespace-nowrap text-[#111]">5 Message(s)</span>
      <div className="h-[27px] w-px bg-[#9cc0d8]" />
      <div className="ml-[9px] h-[22px] w-[2px] border-l-2 border-dotted border-[#8b9fae]" />
      <span className="ml-[6px] w-[399px] text-[12.5px] tracking-[0.15px] text-[#7a3b00]">PAUSED: 0.000410800s</span>
      <div className="h-[27px] w-px bg-[#9cc0d8]" />
      <div className="ml-[7px] h-[22px] w-[2px] border-l-2 border-dotted border-[#8b9fae]" />
      <span className="ml-[557px] w-[50px] text-[12px] text-[#222]">+1900.0</span>
      <span className="ml-[557px] w-[35px] text-[12px] text-[#111]">-200.0</span>
      <span className="ml-[24px] text-[13px] text-[#000080]">th</span>
    </div>
  );
}

function WinLogo() {
  return (
    <svg width={29} height={29} viewBox="0 0 29 29">
      <defs>
        <linearGradient id="winGrad" x1="0" y1="0" x2="1" y2="1">
          <stop offset="0" stopColor="#7fe0fb" />
          <stop offset="1" stopColor="#0f8ff0" />
        </linearGradient>
      </defs>
      <path d="M1 0h12.5v13.5H0V1a1 1 0 0 1 1-1zM15 0h13a1 1 0 0 1 1 1v12.5H15zM0 15h13.5v14H1a1 1 0 0 1-1-1zM15 15h14v13a1 1 0 0 1-1 1H15z" fill="url(#winGrad)" />
    </svg>
  );
}

function Chrome() {
  return (
    <svg width={29} height={29} viewBox="0 0 30 30">
      <path d="M15 15L2 7.5A15 15 0 0 1 28 7.5Z" fill="#dc4437" />
      <path d="M15 15L28 7.5A15 15 0 0 1 15 30Z" fill="#f4bd19" />
      <path d="M15 15L15 30A15 15 0 0 1 2 7.5Z" fill="#1ea362" />
      <circle cx={15} cy={15} r={7.5} fill="#fff" />
      <circle cx={15} cy={15} r={5.8} fill="#3d7fe8" />
    </svg>
  );
}

function Atom({ size = 30 }: { size?: number }) {
  return (
    <svg width={size} height={size} viewBox="0 0 30 30">
      <g fill="none" stroke="#b9b7a4" strokeWidth={1.5}>
        <ellipse cx={15} cy={15} rx={6} ry={15} transform="rotate(30 15 15)" />
        <ellipse cx={15} cy={15} rx={6} ry={15} transform="rotate(-30 15 15)" />
      </g>
      <circle cx={15} cy={15} r={6} fill="#6d8bb0" />
      <circle cx={13.5} cy={13.5} r={2.5} fill="#cfe0f0" />
    </svg>
  );
}

function TaskIcon({ children }: { children: ReactNode }) {
  return <div className="relative flex h-[50px] w-[55.1px] shrink-0 items-center justify-center">{children}</div>;
}

function Taskbar() {
  return (
    <div className="flex h-[60px] shrink-0 items-center bg-[linear-gradient(90deg,#221e1c_0%,#25201c_35%,#3a1f17_48%,#4a1716_55%,#4a1715_64%,#1d2a3c_72%,#1a2838_74%,#272422_80%,#272422_90%,#14263f_100%)] font-['Noto_Sans',sans-serif] text-white">
      <div className="flex w-[520px] shrink-0 items-center">
        <svg width={32} height={28} viewBox="0 0 32 28" className="ml-[23px] shrink-0">
          <path d="M19 1a9 9 0 0 1 9 15H17z" fill="#f5b920" />
          <path d="M8 27a7 7 0 0 1-1-14 9 9 0 0 1 17 2 6 6 0 0 1 1 12z" fill="#9fa7a9" />
          <path d="M9 27a6 6 0 0 1 2-10 8 8 0 0 1 12 2 5 5 0 0 1 0 8z" fill="#cfc8a5" />
        </svg>
        <div className="ml-[9px] flex flex-col text-[14px] leading-[20px]">
          <span className="text-white">87°F</span>
          <span className="text-[#cfcfcf]">Haze</span>
        </div>
      </div>

      <TaskIcon><WinLogo /></TaskIcon>
      <TaskIcon>
        <svg width={30} height={30} viewBox="0 0 30 30">
          <circle cx={13} cy={12} r={10} fill="#4a4744" stroke="#e8e8e8" strokeWidth={3} />
          <path d="M20 20l7 8" stroke="#e8e8e8" strokeWidth={3} strokeLinecap="round" />
        </svg>
      </TaskIcon>
      <TaskIcon>
        <svg width={30} height={30} viewBox="0 0 30 30">
          <rect x={1} y={10} width={19} height={19} rx={2} fill="#5d5b59" />
          <rect x={9} y={1} width={20} height={20} rx={2} fill="#f1f1f1" />
          <rect x={9} y={10} width={11} height={11} fill="#a9a9a8" />
        </svg>
      </TaskIcon>
      <TaskIcon>
        <svg width={30} height={32} viewBox="0 0 30 32">
          <path d="M15 1a14 14 0 0 1 0 27H3v3l1-6A14 14 0 0 1 15 1z" fill="#7166c4" />
          <rect x={9} y={10} width={9} height={9} rx={1.5} fill="#fff" />
          <path d="M19 13l4-2v7l-4-2z" fill="#fff" />
        </svg>
      </TaskIcon>
      <TaskIcon>
        <svg width={30} height={32} viewBox="0 0 30 32">
          <path d="M0 28h30v4H0z" fill="#3a1a10" />
          <path d="M2 11l6-10 6 10-6 8z" fill="#ffe600" stroke="#111" />
          <path d="M17 15l6-11 6 11-6 9z" fill="#19e6f0" stroke="#111" />
          <path d="M4 21l8-12 8 12-8 10z" fill="#18d83c" stroke="#111" />
        </svg>
      </TaskIcon>
      <TaskIcon>
        <svg width={30} height={34} viewBox="0 0 30 34">
          <path d="M10 7a5 5 0 0 1 10 0" fill="none" stroke="#5ac0f5" strokeWidth={2} />
          <path d="M1 7h28v23a3 3 0 0 1-3 3H4a3 3 0 0 1-3-3z" fill="#f2f2f2" />
          <rect x={9} y={12} width={5.5} height={5.5} fill="#e8532a" />
          <rect x={15.5} y={12} width={5.5} height={5.5} fill="#6ab82a" />
          <rect x={9} y={18.5} width={5.5} height={5.5} fill="#1f9ce8" />
          <rect x={15.5} y={18.5} width={5.5} height={5.5} fill="#f7b70c" />
        </svg>
      </TaskIcon>
      <TaskIcon>
        <svg width={30} height={30} viewBox="0 0 30 30">
          <circle cx={14} cy={14} r={13} fill="#2b6ea8" />
          <path d="M4 10q9 2 14 14M7 5q9 4 13 17M12 2q7 5 10 18" fill="none" stroke="#dce9f5" strokeWidth={1.6} />
          <circle cx={24} cy={24} r={5} fill="#d9e6f0" stroke="#2b6ea8" strokeWidth={1.5} />
        </svg>
      </TaskIcon>
      <TaskIcon>
        <svg width={26} height={30} viewBox="0 0 26 30">
          <rect x={2} y={2} width={22} height={26} fill="#111" stroke="#eee" strokeWidth={2} strokeDasharray="3 2" />
          <rect x={5} y={5} width={16} height={20} fill="#22e01f" />
          <path d="M10 8v14M15 8v14M10 13h5" stroke="#111" strokeWidth={1.5} />
        </svg>
      </TaskIcon>
      <TaskIcon><FaEdge size={29} className="text-[#2fa8d8]" /></TaskIcon>
      <TaskIcon><FaSpotify size={29} className="rounded-full bg-[#111] text-[#1ed760]" /></TaskIcon>
      <TaskIcon><VscVscode size={29} className="text-[#1d9ce5]" /></TaskIcon>
      <TaskIcon>
        <svg width={30} height={28} viewBox="0 0 30 28">
          <path d="M0 2a2 2 0 0 1 2-2h9l3 4H0z" fill="#d99c10" />
          <rect x={0} y={4} width={30} height={24} rx={1.5} fill="#fbd04a" />
          <rect x={9} y={19} width={12} height={9} rx={1} fill="#1f80c8" />
        </svg>
      </TaskIcon>
      <TaskIcon>
        <div className="relative">
          <div className="absolute inset-[3px] rounded-full bg-[#25d366]" />
          <FaWhatsapp size={30} className="relative text-[#f5f5f5]" />
        </div>
      </TaskIcon>
      <TaskIcon>
        <Chrome />
        <div className="absolute bottom-[1px] h-[4px] w-[8px] rounded-[2px] bg-[#8a8a8a]" />
      </TaskIcon>
      <TaskIcon>
        <svg width={32} height={32} viewBox="0 0 32 32">
          <rect x={2} y={0} width={19} height={27} rx={3} fill="#f2f2f2" />
          <path d="M8 8H6v2M6 14v3h6" fill="none" stroke="#e0452c" strokeWidth={2.5} />
          <path d="M14 14l6 11M28 10l-10 15" stroke="#5c8fb8" strokeWidth={2} />
          <circle cx={16} cy={28} r={3} fill="none" stroke="#2a8fd8" strokeWidth={1.5} />
          <circle cx={23} cy={28} r={3} fill="none" stroke="#2a8fd8" strokeWidth={1.5} />
        </svg>
        <div className="absolute bottom-[1px] h-[4px] w-[8px] rounded-[2px] bg-[#8a8a8a]" />
      </TaskIcon>
      <TaskIcon>
        <div className="absolute inset-y-0 left-[3px] right-[3px] rounded-[5px] border border-[#ffffff14] bg-[#ffffff14]" />
        <div className="relative"><Atom /></div>
        <div className="absolute bottom-[1px] h-[4px] w-[19px] rounded-[2px] bg-[#d89ae0]" />
      </TaskIcon>

      <div className="ml-auto flex shrink-0 items-center">
        <ChevronUp size={20} strokeWidth={1.5} className="text-[#e8e8e8]" />
        <div className="ml-[17px] flex flex-col items-center text-[14px] leading-[20px]">
          <span>ENG</span>
          <span>IN</span>
        </div>
        <svg width={22} height={22} viewBox="0 0 22 22" className="ml-[23px]">
          <g fill="none" stroke="#eee" strokeWidth={1.2}>
            <circle cx={10} cy={10} r={9} />
            <ellipse cx={10} cy={10} rx={4} ry={9} />
            <path d="M1 7h18M1 13h18" />
          </g>
          <circle cx={15.5} cy={15.5} r={5.5} fill="#2a2725" stroke="#eee" strokeWidth={1.2} />
          <path d="M12 19l7-7" stroke="#eee" strokeWidth={1.2} />
        </svg>
        <VolumeX size={20} strokeWidth={1.4} className="ml-[8px] text-[#eee]" />
        <svg width={22} height={18} viewBox="0 0 22 18" className="ml-[9px]">
          <path d="M3 5h15a1 1 0 0 1 1 1v9a1 1 0 0 1-1 1H3a1 1 0 0 1-1-1V6a1 1 0 0 1 1-1z" fill="none" stroke="#eee" strokeWidth={1.3} />
          <rect x={4} y={8} width={12} height={6} fill="#eee" />
          <rect x={19.5} y={8} width={2} height={5} fill="#eee" />
          <path d="M5 0L3 5h3L4 9" stroke="#eee" fill="none" />
        </svg>
        <div className="ml-[19px] flex flex-col items-end text-[14px] leading-[20px] tracking-[0.35px]">
          <span>23:34</span>
          <span>24-09-2022</span>
        </div>
        <div className="mr-[22px] ml-[7px] flex h-[22px] w-[23px] items-center justify-center rounded-full bg-[#dd9be0] text-[12px] text-[#1a1a1a]">24</div>
      </div>
    </div>
  );
}

const menus = ['File', 'Edit', 'View', 'Tool', 'Design', 'Graph', 'Debug', 'Library', 'Template', 'System', 'Help'];

export default function App() {
  return (
    <div className="flex h-[1080px] w-[1920px] flex-col overflow-hidden bg-[#e3eaf1] font-['Liberation_Sans',Arial,sans-serif]">
      {/* Title bar */}
      <div className="flex h-[29px] shrink-0 items-center bg-linear-to-r from-[#f3f0ee] to-[#eef4f7] font-['Noto_Sans',sans-serif] text-[14px] text-[#1a1a1a]">
        <div className="ml-[4px]"><Atom size={20} /></div>
        <span className="ml-[4px] tracking-[0.05px]">exp02 - Proteus 8 Professional - Schematic Capture</span>
        <div className="ml-auto flex items-center">
          <svg width={12} height={12} viewBox="0 0 12 12"><path d="M1 6.5H11" stroke="#222" /></svg>
          <svg width={12} height={12} viewBox="0 0 12 12" className="ml-[46px]"><path d="M1.5 3.5h7v7h-7zM3.5 3.5v-2h7v7h-2" fill="none" stroke="#222" /></svg>
          <svg width={12} height={12} viewBox="0 0 12 12" className="mr-[25px] ml-[48px]"><path d="M1 1l10 10M11 1L1 11" stroke="#222" /></svg>
        </div>
      </div>

      {/* Menu bar */}
      <div className="flex h-[23px] shrink-0 items-center gap-[19px] bg-white pl-[9px] font-['Noto_Sans',sans-serif] text-[14px] tracking-[-0.1px] text-[#111]">
        {menus.map((m) => (
          <span key={m}>{m}</span>
        ))}
      </div>

      <MainToolbar />
      <TabRow />

      <div className="flex min-h-0 flex-1">
        <LeftTools />
        <DevicePanel />
        <div className="flex min-w-0 flex-1 bg-[#c0dcee] pl-[3px]">
          <div className="flex flex-col">
            <div className="overflow-hidden border-t border-l border-[#6f767b]">
              <Schematic />
            </div>
            <div className="h-px bg-[#6f767b]" />
          </div>
        </div>
      </div>

      <StatusBar />
      <Taskbar />
    </div>
  );
}
